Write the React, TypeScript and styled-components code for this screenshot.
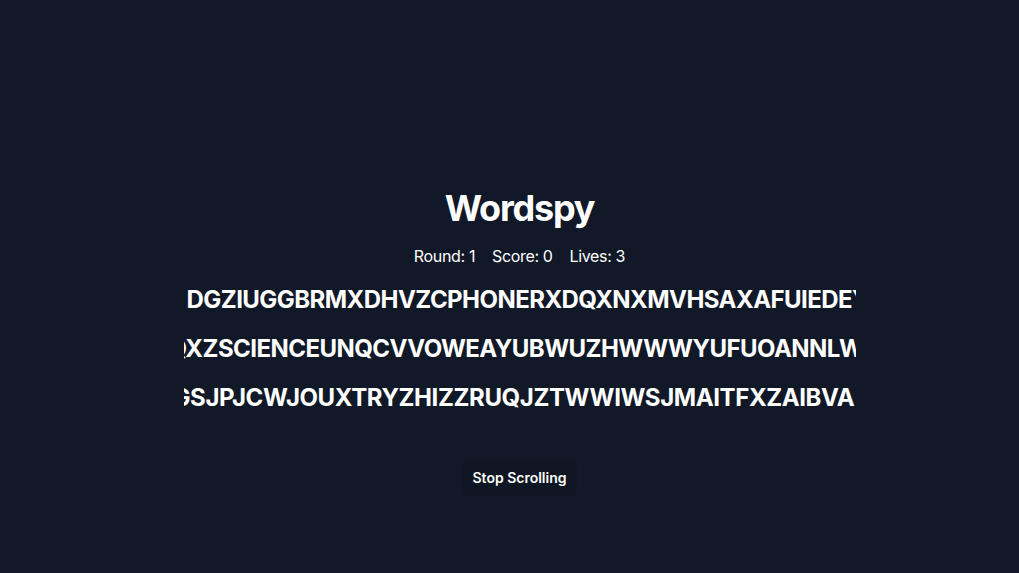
import React from "react";
import styled, { createGlobalStyle } from "styled-components";

const Global = createGlobalStyle`
  html, body { margin: 0; padding: 0; background: #111827; }
  body { font-family: Inter, "Liberation Sans", Arial, sans-serif; color: #ffffff; }
`;

const Page = styled.main`
  min-height: 573px;
  box-sizing: border-box;
  padding: 188px 0 0 20px;
  display: flex;
  flex-direction: column;
  align-items: center;
  background: #111827;
`;

const Title = styled.h1`
  margin: 0;
  font-size: 36px;
  line-height: 40px;
  font-weight: 700;
  letter-spacing: -1.2px;
`;

const Stats = styled.div`
  margin-top: 16px;
  display: flex;
  gap: 17px;
  font-size: 16px;
  line-height: 24px;
  letter-spacing: -0.35px;
`;

const Board = styled.div`
  margin-top: 7px;
  width: 672px;
  display: flex;
  flex-direction: column;
  overflow: hidden;
`;

const Row = styled.div<{ $offset: number; $spacing: number }>`
  height: 49px;
  line-height: 49px;
  font-size: 24px;
  font-weight: 700;
  letter-spacing: ${(p) => p.$spacing}px;
  white-space: nowrap;
  overflow: hidden;
  & > span {
    display: inline-block;
    margin-left: ${(p) => p.$offset}px;
  }
`;

const Button = styled.button`
  margin-top: 37px;
  height: 37px;
  padding: 0 10px;
  border: none;
  border-radius: 6px;
  background: #101724;
  color: #ffffff;
  font-family: Inter, "Liberation Sans", Arial, sans-serif;
  font-size: 14px;
  font-weight: 600;
  cursor: pointer;
`;

const rows = [
  { text: "DGZIUGGBRMXDHVZCPHONERXDQXNXMVHSAXAFUIEDEYWQ", offset: 3, spacing: -0.55 },
  { text: "QXZSCIENCEUNQCVVOWEAYUBWUZHWWWYUFUOANNLWKP", offset: -15, spacing: -0.55 },
  { text: "GSJPJCWJOUXTRYZHIZZRUQJZTWWIWSJMAITFXZAIBVA", offset: -11, spacing: -0.4 },
];

export default function App() {
  return (
    <>
      <Global />
      <Page>
        <Title>Wordspy</Title>
        <Stats>
          <span>Round: 1</span>
          <span>Score: 0</span>
          <span>Lives: 3</span>
        </Stats>
        <Board>
          {rows.map((r) => (
            <Row key={r.text} $offset={r.offset} $spacing={r.spacing}>
              <span>{r.text}</span>
            </Row>
          ))}
        </Board>
        <Button>Stop Scrolling</Button>
      </Page>
    </>
  );
}
